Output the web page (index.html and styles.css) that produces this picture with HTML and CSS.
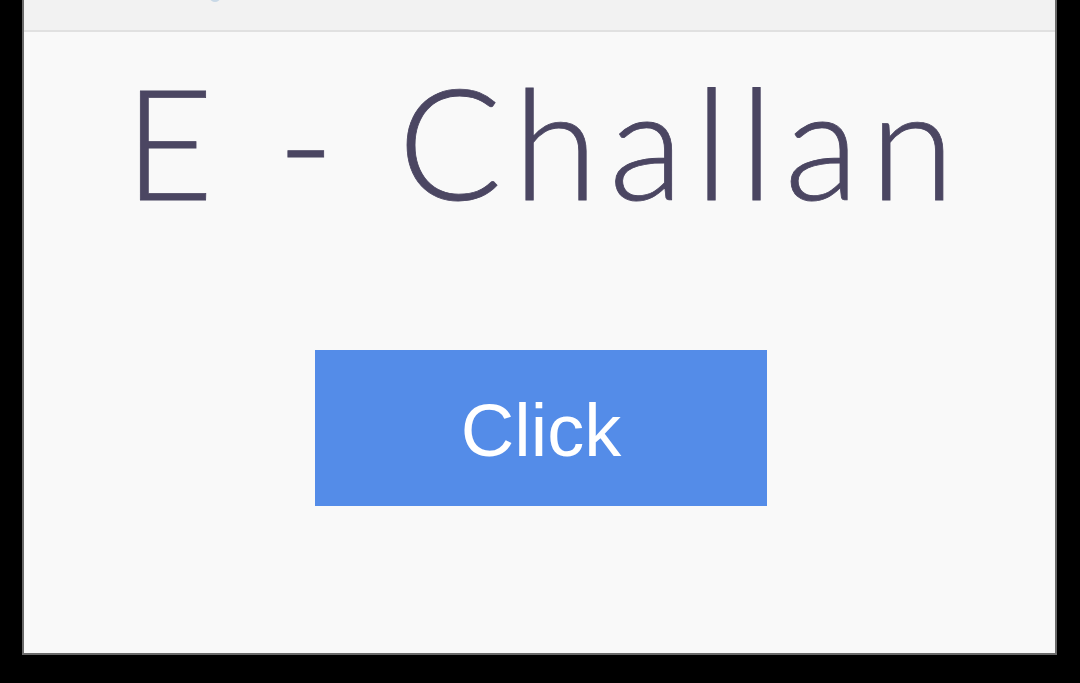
FILE: index.html
```html
<!DOCTYPE html>
<html>
<head>
<meta charset="utf-8">
<link rel="stylesheet" href="styles.css">
</head>
<body>
<div class="window">
  <div class="topbar"><span class="blip"></span></div>
  <main class="content">
    <h1 class="title">E - Challan</h1>
    <button class="btn">Click</button>
  </main>
</div>
</body>
</html>
```

FILE: styles.css
```css
html, body {
  margin: 0;
  padding: 0;
  background: #000;
  height: 683px;
  overflow: hidden;
}
.window {
  margin-left: 22px;
  width: 1031px;
  height: 653px;
  border: 2px solid #6a6a6a;
  border-top: none;
  display: flex;
  flex-direction: column;
  background: #f9f9f9;
}
.topbar {
  height: 30px;
  background: #f2f2f2;
  border-bottom: 2px solid #e1e1e1;
  position: relative;
  flex: none;
}
.blip {
  position: absolute;
  left: 186px;
  top: -6px;
  width: 10px;
  height: 8px;
  border-radius: 50%;
  background: #c8d8e6;
}
.content {
  flex: 1;
  display: flex;
  flex-direction: column;
  align-items: center;
}
.title {
  margin: 32px 0 0 11px;
  font-family: "Lato", "DejaVu Sans", sans-serif;
  font-weight: 300;
  font-size: 154px;
  line-height: 1;
  color: #4b4662;
  letter-spacing: 11px;
  -webkit-text-stroke: 0.8px #4b4662;
}
.btn {
  margin-top: 132px;
  margin-left: 3px;
  width: 452px;
  height: 156px;
  border: none;
  background: #548ce8;
  color: #fff;
  font-family: "Liberation Sans", Arial, sans-serif;
  font-size: 74px;
  padding: 4px 0 0 0;
  cursor: pointer;
}
```
